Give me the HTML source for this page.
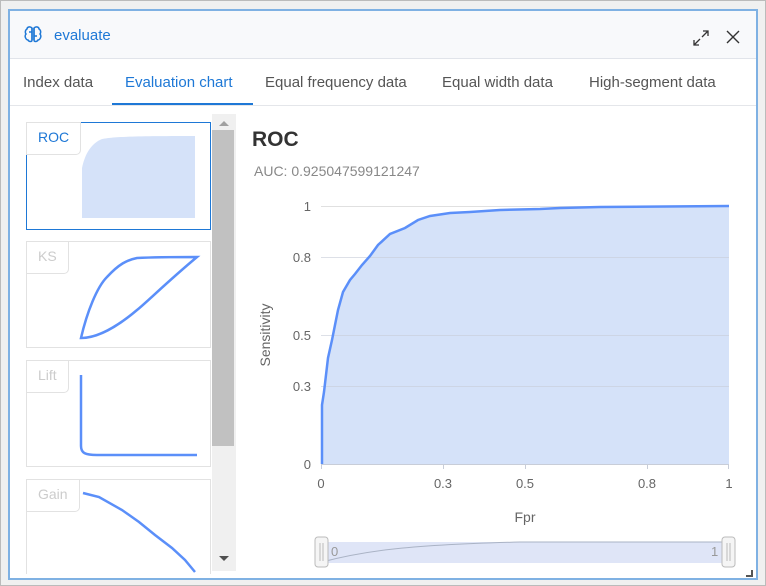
<!DOCTYPE html>
<html><head><meta charset="utf-8"><style>
*{box-sizing:border-box;margin:0;padding:0}
body{width:766px;height:586px;background:#fff;font-family:"Liberation Sans",sans-serif;position:relative;overflow:hidden}
.outer{position:absolute;left:0;top:0;width:766px;height:586px;border:1px solid #bbb;background:#f0f0f0}
.win{position:absolute;left:8px;top:9px;width:750px;height:571px;border:2px solid #7fb1e3;background:#fff}
.hdr{position:absolute;left:0;top:0;width:746px;height:48px;background:#f8f9fb;border-bottom:1px solid #e1e4ea}
.title{position:absolute;left:44px;top:16px;font-size:15px;color:#1e78d6}
.tabs{position:absolute;left:0;top:48px;width:746px;height:47px;border-bottom:1px solid #e4e6ea}
.tab{position:absolute;top:15px;font-size:15px;color:#555}
.ul{position:absolute;left:102px;top:44px;width:141px;height:2px;background:#1e78d6}
.sb{position:absolute;left:202px;top:103px;width:24px;height:457px;background:#f0f0f0}
.th{position:absolute;left:202px;top:119px;width:22px;height:316px;background:#c1c1c1}
.card{position:absolute;left:16px;width:185px;border:1px solid #e2e2e2;background:#fff}
.lab{position:absolute;left:-1px;top:-1px;height:33px;border:1px solid #e2e2e2;border-radius:0 0 5px 0;font-size:14px;color:#ccc;padding:6px 11px}
.ax{font-size:13px;fill:#666;font-family:"Liberation Sans",sans-serif}
</style></head><body>
<div class="outer"></div>
<div class="win">
 <div class="hdr">
  <svg style="position:absolute;left:14px;top:15px" width="18" height="17" viewBox="0 0 18 17" fill="none" stroke="#1e78d6" stroke-width="1.5"><path d="M8 2C6 0 3 1 3 3 1 4 1 7 2 8 0 10 2 14 4 14 5 16 8 16 8 14Z"/><path d="M10 2C12 0 15 1 15 3 17 4 17 7 16 8 18 10 16 14 14 14 13 16 10 16 10 14Z"/><path d="M8 2V14M10 2V14M5 6h3M10 10h3"/></svg>
  <div class="title">evaluate</div>
  <svg style="position:absolute;left:682px;top:18px" width="18" height="18" viewBox="0 0 18 18" fill="none" stroke="#333" stroke-width="1.3"><path d="M10 8L16 2M11 2h5v5M8 10L2 16M2 11v5h5"/></svg>
  <svg style="position:absolute;left:715px;top:18px" width="16" height="16" viewBox="0 0 16 16" stroke="#333" stroke-width="1.4"><path d="M2 2L14 14M14 2L2 14"/></svg>
 </div>
 <div class="tabs">
  <div class="tab" style="left:13px">Index data</div>
  <div class="tab" style="left:115px;color:#1e78d6">Evaluation chart</div>
  <div class="tab" style="left:255px">Equal frequency data</div>
  <div class="tab" style="left:432px">Equal width data</div>
  <div class="tab" style="left:579px">High-segment data</div>
  <div class="ul"></div>
 </div>
 <div class="card" style="top:111px;height:108px;border-color:#1e78d6">
  <svg style="position:absolute;left:0;top:0" width="183" height="106"><path d="M55 95V45C58 30 65 20 75 16 85 14 100 13 168 13V95Z" fill="#d5e2f9"/></svg>
  <div class="lab" style="color:#1e78d6;border-color:#e2e2e2">ROC</div>
 </div>
 <div class="card" style="top:230px;height:107px">
  <svg style="position:absolute;left:0;top:0" width="183" height="105"><path d="M54 96C60 70 70 45 80 35 92 22 100 18 110 16 130 15 150 15 170 15 140 40 120 60 110 68 90 85 70 96 54 96Z" fill="none" stroke="#5b8ff9" stroke-width="2.5"/></svg>
  <div class="lab">KS</div>
 </div>
 <div class="card" style="top:349px;height:107px">
  <svg style="position:absolute;left:0;top:0" width="183" height="105"><path d="M54 14V85C54 92 58 94 70 94H170" fill="none" stroke="#5b8ff9" stroke-width="2.5"/></svg>
  <div class="lab">Lift</div>
 </div>
 <div class="card" style="top:468px;height:95px;border-bottom:none">
  <svg style="position:absolute;left:0;top:0" width="183" height="95"><path d="M56 13L72 17 95 30 112 42 128 55 145 68 158 80 168 92" fill="none" stroke="#5b8ff9" stroke-width="2.5"/></svg>
  <div class="lab">Gain</div>
 </div>
 <div class="sb"></div><div class="th"></div>
 <svg style="position:absolute;left:208px;top:108px" width="12" height="8"><path d="M1 7L6 2 11 7Z" fill="#a0a0a0"/></svg>
 <svg style="position:absolute;left:208px;top:544px" width="12" height="8"><path d="M1 1L6 6 11 1Z" fill="#505050"/></svg>
</div>
<div style="position:absolute;left:252px;top:128px;font-size:21px;font-weight:bold;color:#333">ROC</div>
<div style="position:absolute;left:254px;top:163px;font-size:14px;color:#888">AUC: 0.925047599121247</div>
<svg style="position:absolute;left:0;top:0" width="766" height="586">
 <path d="M322 464L322 405 324 392 326 375 328 358 332 340 335 325 338 310 343 292 350 280 355 274 362 265 370 256 378 245 390 234 405 228 418 220 430 216 450 213 470 212 500 210 540 209 560 208 600 207 729 206V464Z" fill="#d5e2f9"/>
 <g stroke="#c8cdd8"><path d="M321 206.5H729" stroke="#e0e0e0"/><path d="M321 257.5H729M321 335.5H729M321 386.5H729" opacity=".6"/><path d="M321 464.5H729M321.5 464v5M443.5 464v5M525.5 464v5M647.5 464v5M728.5 464v5"/></g>
 <path d="M322 464L322 405 324 392 326 375 328 358 332 340 335 325 338 310 343 292 350 280 355 274 362 265 370 256 378 245 390 234 405 228 418 220 430 216 450 213 470 212 500 210 540 209 560 208 600 207 729 206" fill="none" stroke="#5b8ff9" stroke-width="2.5"/>
 <g class="ax" text-anchor="end"><text x="311" y="211">1</text><text x="311" y="262">0.8</text><text x="311" y="340">0.5</text><text x="311" y="391">0.3</text><text x="311" y="469">0</text></g>
 <g class="ax" text-anchor="middle"><text x="321" y="488">0</text><text x="443" y="488">0.3</text><text x="525" y="488">0.5</text><text x="647" y="488">0.8</text><text x="729" y="488">1</text><text x="525" y="522" style="font-size:14px">Fpr</text></g>
 <text class="ax" transform="translate(270 335) rotate(-90)" text-anchor="middle" style="font-size:14px">Sensitivity</text>
 <rect x="321" y="542" width="408" height="21" fill="#dfe5f7"/>
 <path d="M322 562C360 552 400 545 520 542H729" fill="none" stroke="#aab3c5"/>
 <rect x="315" y="537" width="13" height="30" rx="3" fill="#f5f5f5" stroke="#bbb"/>
 <rect x="722" y="537" width="13" height="30" rx="3" fill="#f5f5f5" stroke="#bbb"/>
 <path d="M320 543v18M323 543v18M727 543v18M730 543v18" stroke="#bbb"/>
 <text x="331" y="556" class="ax" style="fill:#999">0</text><text x="711" y="556" class="ax" style="fill:#999">1</text>
 <path d="M746 576h6v-6" stroke="#555" fill="none" stroke-width="2"/>
</svg>
</body></html>
